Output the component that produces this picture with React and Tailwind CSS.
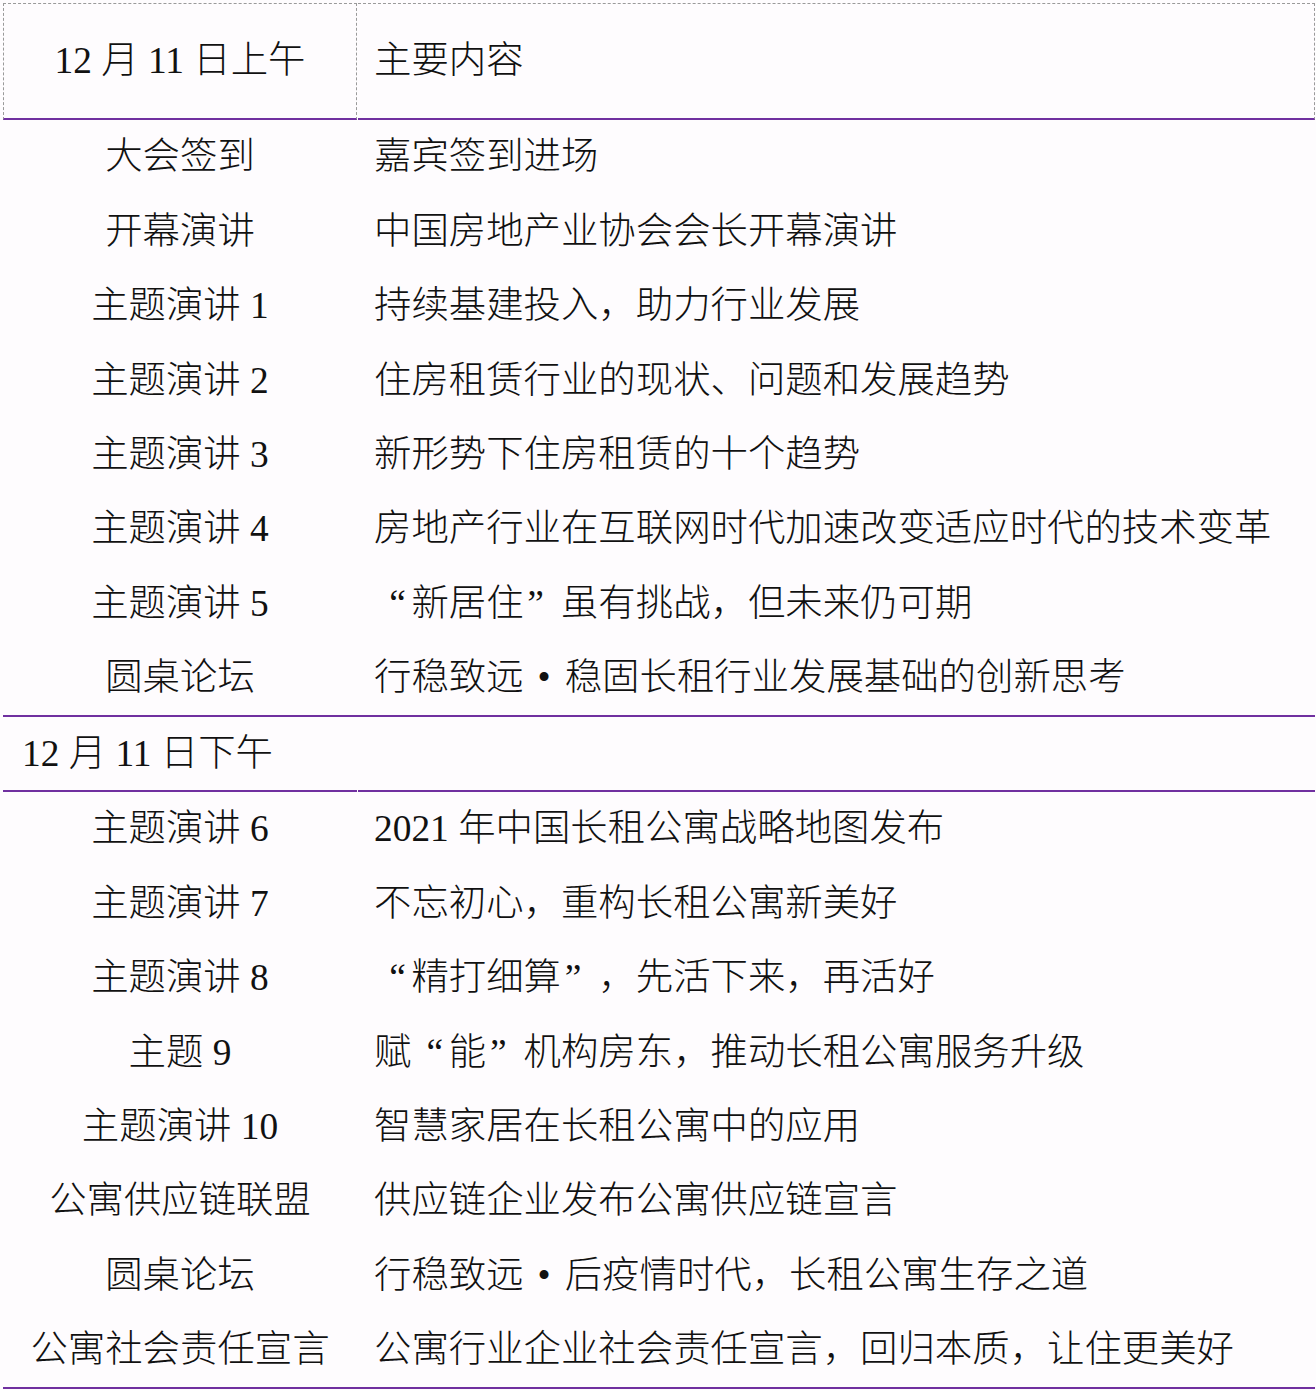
import React from "react";

const Q1 = () => <span className="inline-block w-[1em] text-right pr-[0.15em]">“</span>;
const Q2 = () => <span className="inline-block w-[1em] text-left pl-[0.1em]">”</span>;
const Dot = () => <span className="inline-block w-[1.1em] text-center">•</span>;

const morning = [
  ["大会签到", <>嘉宾签到进场</>],
  ["开幕演讲", <>中国房地产业协会会长开幕演讲</>],
  ["主题演讲 1", <>持续基建投入，助力行业发展</>],
  ["主题演讲 2", <>住房租赁行业的现状、问题和发展趋势</>],
  ["主题演讲 3", <>新形势下住房租赁的十个趋势</>],
  ["主题演讲 4", <>房地产行业在互联网时代加速改变适应时代的技术变革</>],
  ["主题演讲 5", <><Q1 />新居住<Q2 />虽有挑战，但未来仍可期</>],
  ["圆桌论坛", <>行稳致远<Dot />稳固长租行业发展基础的创新思考</>],
];

const afternoon = [
  ["主题演讲 6", <>2021 年中国长租公寓战略地图发布</>],
  ["主题演讲 7", <>不忘初心，重构长租公寓新美好</>],
  ["主题演讲 8", <><Q1 />精打细算<Q2 />，先活下来，再活好</>],
  ["主题 9", <>赋<Q1 />能<Q2 />机构房东，推动长租公寓服务升级</>],
  ["主题演讲 10", <>智慧家居在长租公寓中的应用</>],
  ["公寓供应链联盟", <>供应链企业发布公寓供应链宣言</>],
  ["圆桌论坛", <>行稳致远<Dot />后疫情时代，长租公寓生存之道</>],
  ["公寓社会责任宣言", <>公寓行业企业社会责任宣言，回归本质，让住更美好</>],
];

function Row({ left, right }) {
  return (
    <div className="flex items-center">
      <div className="w-[354px] shrink-0 text-center whitespace-nowrap">{left}</div>
      <div className="flex-1 pl-[16px] ml-[1px] whitespace-nowrap">{right}</div>
    </div>
  );
}

export default function App() {
  return (
    <div className="w-[1316px] h-[1390px] bg-[#fefcfe] pt-[3px] pl-[3px] pr-[1px] text-[37.4px] leading-none font-light text-[#111] font-['Liberation_Serif','Noto_Sans_CJK_SC',serif]">
      {/* header */}
      <div className="flex h-[117px]">
        <div className="w-[354px] shrink-0 flex items-center justify-center border-t border-l border-r border-dashed border-t-[#9a9a9a] border-l-[#9a9a9a] border-r-[#9a9a9a] border-b-2 border-b-[#7030a0] [border-bottom-style:solid]">
          12 月 11 日上午
        </div>
        <div className="flex-1 ml-[1px] flex items-center pl-[16px] border-t border-r border-dashed border-t-[#9a9a9a] border-r-[#9a9a9a] border-b-2 border-b-[#7030a0] [border-bottom-style:solid]">
          主要内容
        </div>
      </div>

      {/* morning */}
      <div className="grid grid-rows-8 h-[597px] border-b-2 border-[#7030a0]">
        {morning.map(([l, r], i) => (
          <Row key={i} left={l} right={r} />
        ))}
      </div>

      {/* afternoon header */}
      <div className="flex h-[75px]">
        <div className="w-[354px] shrink-0 flex items-center pl-[19px] border-b-2 border-[#7030a0] whitespace-nowrap">
          12 月 11 日下午
        </div>
        <div className="flex-1 ml-[1px] border-b-2 border-[#7030a0]"></div>
      </div>

      {/* afternoon */}
      <div className="grid grid-rows-8 h-[597px] border-b-2 border-[#7030a0]">
        {afternoon.map(([l, r], i) => (
          <Row key={i} left={l} right={r} />
        ))}
      </div>
    </div>
  );
}
